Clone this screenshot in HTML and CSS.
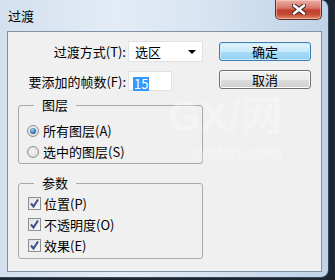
FILE: index.html
```html
<!DOCTYPE html>
<html lang="zh-CN">
<head>
    <meta charset="UTF-8">
    <title>过渡</title>
    <link rel="stylesheet" href="styles.css">
</head>
<body>
    <div class="window">
        <div class="titlebar">
            <span class="title">过渡</span>
            <div class="close">
                <svg width="14" height="11" viewBox="0 0 14 11">
                    <path d="M2 1.5 L12 9.5 M12 1.5 L2 9.5" stroke="#3b2020" stroke-width="4.5" stroke-linecap="round"/>
                    <path d="M2 1.5 L12 9.5 M12 1.5 L2 9.5" stroke="#fff" stroke-width="2.6" stroke-linecap="round"/>
                </svg>
            </div>
        </div>
        <div class="client">
            <div class="main">
                <div class="fields">
                    <label class="label">过渡方式(T):</label>
                    <div class="select"><span>选区</span><span class="arrow"></span></div>
                    <label class="label">要添加的帧数(F):</label>
                    <div class="input"><span class="selected">15</span></div>
                </div>

                <fieldset class="group">
                    <legend>图层</legend>
                    <div class="options">
                        <div class="option"><span class="radio checked"></span>所有图层(A)</div>
                        <div class="option"><span class="radio"></span>选中的图层(S)</div>
                    </div>
                </fieldset>

                <fieldset class="group group-params">
                    <legend>参数</legend>
                    <div class="options">
                        <div class="option"><span class="check"><svg width="11" height="11" viewBox="0 0 11 11"><path d="M2 5.5 L4.5 8.5 L9 1.5" fill="none" stroke="#3d4f86" stroke-width="2"/></svg></span>位置(P)</div>
                        <div class="option"><span class="check"><svg width="11" height="11" viewBox="0 0 11 11"><path d="M2 5.5 L4.5 8.5 L9 1.5" fill="none" stroke="#3d4f86" stroke-width="2"/></svg></span>不透明度(O)</div>
                        <div class="option"><span class="check"><svg width="11" height="11" viewBox="0 0 11 11"><path d="M2 5.5 L4.5 8.5 L9 1.5" fill="none" stroke="#3d4f86" stroke-width="2"/></svg></span>效果(E)</div>
                    </div>
                </fieldset>
            </div>

            <div class="buttons">
                <button class="btn btn-default">确定</button>
                <button class="btn">取消</button>
            </div>

            <div class="watermark">
                <span class="wm-logo">GX/网</span>
                <span class="wm-site">system.com</span>
            </div>
        </div>
    </div>
</body>
</html>
```

FILE: styles.css
```css
body {
    margin: 0;
    background-color: #1d2631;
    font-family: "Noto Sans CJK SC", "Liberation Sans", sans-serif;
    font-size: 13px;
    color: #000;
}

.window {
    width: 329px;
    height: 278px;
    box-sizing: border-box;
    display: flex;
    flex-direction: column;
    padding: 0 6px 5px 7px;
    border-right: 1px solid #34475c;
    border-bottom: 1px solid #34475c;
    border-radius: 0 8px 8px 0;
    background: linear-gradient(to right, #d3e0ee, #e3ecf6 35%, #d9e5f2 60%, #bfd2e7);
}

.titlebar {
    height: 31px;
    display: flex;
    justify-content: space-between;
    align-items: flex-start;
}

.title {
    margin: 8px 0 0 1px;
    line-height: 16px;
}

.close {
    width: 47px;
    height: 20px;
    box-sizing: border-box;
    display: flex;
    justify-content: center;
    align-items: center;
    border: 1px solid #5a2d28;
    border-top: none;
    border-radius: 0 0 5px 5px;
    background: linear-gradient(#eab0a6 0%, #d9796b 40%, #c2402f 55%, #c54a33 75%, #e08a6c 100%);
    box-shadow: inset 0 0 0 1px rgba(255, 220, 210, 0.5);
}

.client {
    position: relative;
    flex: 1;
    display: flex;
    padding: 9px 0 0 10px;
    border: 1px solid #8092a6;
    background-color: #f0f0f0;
}

.main {
    width: 185px;
}

.fields {
    display: grid;
    grid-template-columns: 108px 75px;
    column-gap: 2px;
    row-gap: 9px;
}

.label {
    text-align: right;
    line-height: 21px;
    white-space: nowrap;
}

.select {
    height: 21px;
    box-sizing: border-box;
    display: flex;
    justify-content: space-between;
    align-items: center;
    padding: 0 6px 0 6px;
    border: 1px solid #e2e2e2;
    background-color: #fff;
    line-height: 19px;
}

.arrow {
    width: 0;
    height: 0;
    border-left: 4px solid transparent;
    border-right: 4px solid transparent;
    border-top: 4px solid #000;
}

.input {
    width: 44px;
    height: 20px;
    box-sizing: border-box;
    padding: 2px 0 0 4px;
    border: 1px solid #e2e2e2;
    background-color: #fff;
}

.selected {
    display: inline-block;
    height: 14px;
    line-height: 14px;
    padding: 0 1px;
    background-color: #3399ff;
    color: #fff;
}

.group {
    margin: 5px 0 0;
    padding: 0;
    width: 185px;
    box-sizing: border-box;
    border: 1px solid #a9a9a9;
    border-radius: 3px;
}

.group legend {
    margin-left: 15px;
    padding: 0 8px;
    line-height: 16px;
}

.group .options {
    padding: 7px 0 1px;
}

.group-params {
    margin-top: 11px;
}

.group-params .options {
    padding: 2px 0 2px;
}

.option {
    height: 21px;
    display: flex;
    align-items: center;
    padding-left: 8px;
    white-space: nowrap;
}

.radio {
    width: 12px;
    height: 12px;
    box-sizing: border-box;
    margin-right: 4px;
    display: flex;
    justify-content: center;
    align-items: center;
    border: 1px solid #8e8f8f;
    border-radius: 50%;
    background: radial-gradient(circle at 50% 40%, #f6f6f6, #d4d4d4);
}

.radio.checked::after {
    content: "";
    width: 6px;
    height: 6px;
    border-radius: 50%;
    background: radial-gradient(circle at 40% 35%, #9fd6f5, #2e6fb5 60%, #1a4c85);
}

.check {
    width: 13px;
    height: 13px;
    box-sizing: border-box;
    margin: 0 3px 0 1px;
    display: flex;
    justify-content: center;
    align-items: center;
    border: 1px solid #8e8f8f;
    background: linear-gradient(135deg, #dfe3ea, #f7f8fa);
}

.buttons {
    display: flex;
    flex-direction: column;
    gap: 9px;
    margin: 1px 0 0 16px;
}

.btn {
    width: 92px;
    height: 19px;
    padding: 0;
    font-family: inherit;
    font-size: 13px;
    line-height: 16px;
    color: #000;
    border: 1px solid #707070;
    border-radius: 3px;
    background: linear-gradient(#f2f2f2 0%, #ebebeb 50%, #dddddd 51%, #cfcfcf 100%);
    box-shadow: inset 0 0 0 1px #fbfbfb;
}

.btn-default {
    border-color: #3c7fb1;
    background: linear-gradient(#e3f4fd 0%, #c6e9fb 50%, #a9dcf7 51%, #8fd0f2 100%);
    box-shadow: inset 0 0 0 1px #c8ecfd;
}

.watermark {
    position: absolute;
    left: 160px;
    top: 62px;
    display: flex;
    flex-direction: column;
    color: rgba(255, 255, 255, 0.3);
    font-family: "Liberation Sans", "Noto Sans CJK SC", sans-serif;
    font-weight: bold;
    pointer-events: none;
}

.wm-logo {
    font-size: 42px;
    line-height: 46px;
}

.wm-site {
    margin: 4px 0 0 22px;
    font-size: 16px;
    line-height: 18px;
}
```
